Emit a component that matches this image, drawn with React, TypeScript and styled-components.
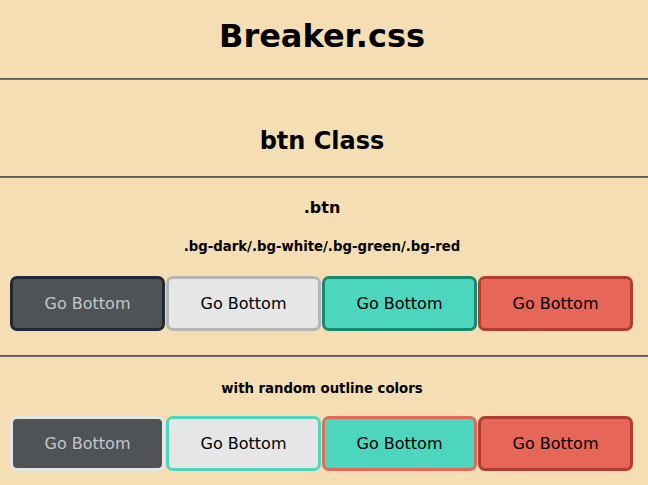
import React from "react";
import styled, { createGlobalStyle } from "styled-components";

const Global = createGlobalStyle`
  html, body { margin: 0; padding: 0; background: #f5deb3; }
  body { font-family: "DejaVu Sans", Verdana, sans-serif; color: #000; }
`;

const Page = styled.div`
  display: flex;
  flex-direction: column;
  background: #f5deb3;
  min-height: 485px;
`;

const Header = styled.header`
  height: 78px;
  padding: 17px 4px 0 0;
  box-sizing: border-box;
`;

const Title = styled.h1`
  margin: 0;
  font-size: 32px;
  font-weight: bold;
  text-align: center;
  line-height: normal;
`;

const Rule = styled.hr`
  margin: 0;
  border: 0;
  border-top: 1px solid #5a5a5a;
  border-bottom: 1px solid #6e6e6e;
  height: 0;
`;

const SectionHead = styled.section`
  height: 96px;
  padding: 47px 4px 0 0;
  box-sizing: border-box;
`;

const SectionTitle = styled.h2`
  margin: 0;
  font-size: 24px;
  font-weight: bold;
  text-align: center;
  line-height: normal;
`;

const Block = styled.section<{ $top: number; $bottom: number }>`
  display: flex;
  flex-direction: column;
  align-items: stretch;
  padding: ${(p) => p.$top}px 14px ${(p) => p.$bottom}px 10px;
`;

const Label = styled.h4`
  margin: 0 0 22px;
  font-size: 16px;
  font-weight: bold;
  text-align: center;
  line-height: normal;
`;

const Sub = styled.h5<{ $gap: number }>`
  margin: 0 0 ${(p) => p.$gap}px;
  font-size: 13.28px;
  font-weight: bold;
  text-align: center;
  line-height: normal;
`;

const Row = styled.div`
  display: flex;
  gap: 1px;
`;

type Tone = "dark" | "white" | "green" | "red";

const fills: Record<Tone, { bg: string; fg: string; border: string }> = {
  dark: { bg: "#4f5356", fg: "#c3c7cb", border: "#1e2933" },
  white: { bg: "#e6e6e6", fg: "#000000", border: "#b5b5b5" },
  green: { bg: "#4cd6bd", fg: "#000000", border: "#158a6e" },
  red: { bg: "#e66657", fg: "#000000", border: "#b33c30" },
};

const Btn = styled.button<{ $tone: Tone; $outline?: string }>`
  width: 155px;
  height: 55px;
  flex: 0 0 155px;
  box-sizing: border-box;
  border: 3px solid ${(p) => p.$outline ?? fills[p.$tone].border};
  border-radius: 7px;
  background: ${(p) => fills[p.$tone].bg};
  color: ${(p) => fills[p.$tone].fg};
  font-family: "DejaVu Sans", Verdana, sans-serif;
  font-size: 16px;
  padding: 0;
  display: flex;
  align-items: center;
  justify-content: center;
  cursor: pointer;
`;

const tones: Tone[] = ["dark", "white", "green", "red"];
const outlines = ["#e6e6e6", "#4cd6bd", "#e66657", "#b33c30"];

export default function App() {
  return (
    <Page>
      <Global />
      <Header>
        <Title>Breaker.css</Title>
      </Header>
      <Rule />
      <SectionHead>
        <SectionTitle>btn Class</SectionTitle>
      </SectionHead>
      <Rule />
      <Block $top={20} $bottom={24}>
        <Label>.btn</Label>
        <Sub $gap={22}>.bg-dark/.bg-white/.bg-green/.bg-red</Sub>
        <Row>
          {tones.map((t) => (
            <Btn key={t} $tone={t}>Go Bottom</Btn>
          ))}
        </Row>
      </Block>
      <Rule />
      <Block $top={24} $bottom={20}>
        <Sub $gap={20}>with random outline colors</Sub>
        <Row>
          {tones.map((t, i) => (
            <Btn key={t} $tone={t} $outline={outlines[i]}>Go Bottom</Btn>
          ))}
        </Row>
      </Block>
    </Page>
  );
}
